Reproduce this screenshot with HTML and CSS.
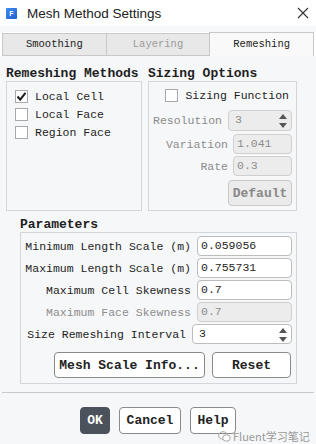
FILE: index.html
```html
<!DOCTYPE html>
<html lang="en">
<head>
    <meta charset="UTF-8">
    <meta name="viewport" content="width=device-width, initial-scale=1.0">
    <title>Mesh Method Settings</title>
    <link rel="stylesheet" href="styles.css">
</head>
<body>
    <div class="titlebar">
        <span class="app-icon">F</span>
        <span class="title">Mesh Method Settings</span>
        <svg class="close" width="12" height="12" viewBox="0 0 12 12">
            <path d="M1 1 L11 11 M11 1 L1 11" stroke="#333" stroke-width="1.1" fill="none"/>
        </svg>
    </div>

    <div class="tabs">
        <div class="tab">Smoothing</div>
        <div class="tab disabled">Layering</div>
        <div class="tab active">Remeshing</div>
    </div>

    <div class="panel">
        <div class="top">
            <div class="group methods">
                <div class="group-title">Remeshing Methods</div>
                <div class="group-box">
                    <label class="check">
                        <span class="box">
                            <svg width="11" height="11" viewBox="0 0 11 11"><path d="M1.5 5.5 L4.2 8.6 L9.5 1.8" stroke="#1e1e1e" stroke-width="2" fill="none"/></svg>
                        </span>
                        Local Cell
                    </label>
                    <label class="check"><span class="box"></span>Local Face</label>
                    <label class="check"><span class="box"></span>Region Face</label>
                </div>
            </div>

            <div class="group sizing">
                <div class="group-title">Sizing Options</div>
                <div class="group-box">
                    <label class="check sizing-fn"><span class="box"></span>Sizing Function</label>
                    <div class="row res-row">
                        <span class="lbl off">Resolution</span>
                        <div class="field spin off w64">3
                            <svg class="arrows" width="8" height="14" viewBox="0 0 8 14"><path d="M0 5 L4 0 L8 5 Z M0 9 L8 9 L4 14 Z" fill="#555"/></svg>
                        </div>
                    </div>
                    <div class="row var-row">
                        <span class="lbl off">Variation</span>
                        <div class="field off w59">1.041</div>
                    </div>
                    <div class="row rate-row">
                        <span class="lbl off">Rate</span>
                        <div class="field off w59">0.3</div>
                    </div>
                    <div class="row btn-row">
                        <button class="btn off w64">Default</button>
                    </div>
                </div>
            </div>
        </div>

        <div class="group params">
            <div class="group-title">Parameters</div>
            <div class="group-box">
                <div class="row">
                    <span class="lbl">Minimum Length Scale (m)</span>
                    <div class="field w95">0.059056</div>
                </div>
                <div class="row">
                    <span class="lbl">Maximum Length Scale (m)</span>
                    <div class="field w95">0.755731</div>
                </div>
                <div class="row">
                    <span class="lbl">Maximum Cell Skewness</span>
                    <div class="field w95">0.7</div>
                </div>
                <div class="row">
                    <span class="lbl off">Maximum Face Skewness</span>
                    <div class="field off w95">0.7</div>
                </div>
                <div class="row">
                    <span class="lbl">Size Remeshing Interval</span>
                    <div class="field spin w100">3
                        <svg class="arrows" width="8" height="14" viewBox="0 0 8 14"><path d="M0 5 L4 0 L8 5 Z M0 9 L8 9 L4 14 Z" fill="#555"/></svg>
                    </div>
                </div>
                <div class="row actions">
                    <button class="btn w151">Mesh Scale Info...</button>
                    <button class="btn w79">Reset</button>
                </div>
            </div>
        </div>
    </div>

    <div class="separator"></div>

    <div class="footer">
        <button class="btn primary">OK</button>
        <button class="btn w62">Cancel</button>
        <button class="btn w46">Help</button>
    </div>

    <div class="watermark">
        <svg width="13" height="11" viewBox="0 0 13 11"><ellipse cx="5" cy="4.5" rx="4.5" ry="3.8" fill="none" stroke="#aaa" stroke-width="1"/><ellipse cx="8.5" cy="7" rx="3.8" ry="3.2" fill="#fff" stroke="#aaa" stroke-width="1"/></svg>
        <span>Fluent学习笔记</span>
    </div>
</body>
</html>
```

FILE: styles.css
```css
body {
    margin: 0;
    width: 316px;
    height: 444px;
    background: #f6f7f8;
    font-family: "Courier New", "Liberation Mono", monospace;
    font-size: 11.5px;
    color: #1e1e1e;
    position: relative;
    overflow: hidden;
}
.titlebar {
    height: 26px;
    background: #fff;
    display: flex;
    align-items: center;
    padding: 0 6px;
}
.app-icon {
    width: 11px;
    height: 11px;
    background: linear-gradient(135deg, #3d8bf0, #1f5fd6);
    color: #fff;
    font-family: "Liberation Sans", sans-serif;
    font-size: 7px;
    font-weight: bold;
    line-height: 11px;
    text-align: center;
    border-radius: 1px;
}
.title {
    margin-left: 10px;
    font-family: "Liberation Sans", sans-serif;
    font-size: 13.5px;
    color: #222;
    flex: 1;
}
.close {
    margin-right: 1px;
}
.tabs {
    display: flex;
    align-items: flex-end;
    height: 24px;
    margin-top: 6px;
    padding: 0 2px;
    background: #fff;
}
.tab {
    flex: 1;
    height: 21px;
    background: #e8e8e8;
    border: 1px solid #c8c8c8;
    border-right: none;
    font-size: 10.5px;
    line-height: 20px;
    text-align: center;
    color: #222;
}
.tab.disabled {
    color: #9a9a9a;
}
.tab.active {
    height: 23px;
    background: #f9f9f9;
    border-right: 1px solid #c8c8c8;
    border-bottom: none;
    line-height: 22px;
}
.panel {
    padding: 10px 19px 0 6px;
}
.top {
    display: flex;
    gap: 6px;
}
.group-title {
    font-size: 13px;
    font-weight: bold;
    line-height: 15px;
    height: 15px;
    white-space: nowrap;
}
.group-box {
    border: 1px solid #d3d6da;
    box-sizing: border-box;
}
.methods {
    width: 136px;
}
.methods .group-box {
    height: 130px;
    padding: 5px 8px;
}
.sizing {
    flex: 1;
}
.sizing .group-box {
    height: 130px;
    padding: 6px 4px 0 0;
}
.check {
    display: flex;
    align-items: center;
    gap: 7px;
    height: 18px;
    line-height: 13px;
}
.box {
    width: 11px;
    height: 11px;
    border: 1px solid #a9a9a9;
    background: #fff;
    display: flex;
    align-items: center;
    justify-content: center;
}
.check.sizing-fn {
    justify-content: flex-end;
    height: 14px;
    margin-bottom: 8px;
    padding-right: 3px;
}
.row {
    display: flex;
    justify-content: flex-end;
    align-items: center;
    gap: 6px;
    height: 20px;
}
.res-row {
    height: 21px;
    margin-bottom: 3px;
}
.var-row {
    gap: 5px;
    margin-bottom: 2px;
}
.rate-row {
    gap: 5px;
    margin-bottom: 4px;
}
.btn-row {
    height: 26px;
}
.lbl {
    white-space: nowrap;
}
.off {
    color: #8c8c8c;
}
.field {
    position: relative;
    height: 100%;
    box-sizing: border-box;
    border: 1px solid #bcbcbc;
    border-radius: 4px;
    background: #fff;
    padding-left: 3px;
    line-height: 18px;
}
.field.off {
    background: #ececec;
    border-color: #cfcfcf;
}
.spin {
    padding-left: 6px;
}
.arrows {
    position: absolute;
    right: 4px;
    top: 3px;
}
.w46 { width: 46px; }
.w59 { width: 59px; }
.w62 { width: 62px; }
.w64 { width: 64px; }
.w79 { width: 79px; }
.w95 { width: 95px; }
.w100 { width: 100px; }
.w151 { width: 151px; }
.params {
    margin: 6px 0 0 14px;
}
.params .group-box {
    height: 152px;
    padding: 3px 4px 0 0;
    display: flex;
    flex-direction: column;
    gap: 2px;
}
.params .actions {
    height: 26px;
    margin-top: 6px;
    gap: 7px;
    padding-right: 1px;
}
.btn {
    height: 26px;
    box-sizing: border-box;
    border: 1px solid #8a8a8a;
    border-radius: 4px;
    background: #fff;
    font-family: "Courier New", "Liberation Mono", monospace;
    font-size: 13px;
    font-weight: bold;
    color: #222;
    padding: 0;
    white-space: nowrap;
}
.btn.off {
    background: #ebebeb;
    border-color: #c8c8c8;
    color: #888;
}
.separator {
    height: 1px;
    margin: 8px 2px 0;
    background: #c9c9c9;
}
.footer {
    display: flex;
    justify-content: center;
    gap: 9px;
    margin-top: 14px;
}
.footer .btn {
    height: 27px;
}
.btn.primary {
    background: #4b525c;
    border-color: #4b525c;
    color: #fff;
    width: 30px;
}
.watermark {
    position: absolute;
    left: 218px;
    top: 428px;
    display: flex;
    align-items: center;
    gap: 2px;
    font-family: "Noto Sans CJK SC", sans-serif;
    font-size: 11px;
    color: #9a9a9a;
}
```
